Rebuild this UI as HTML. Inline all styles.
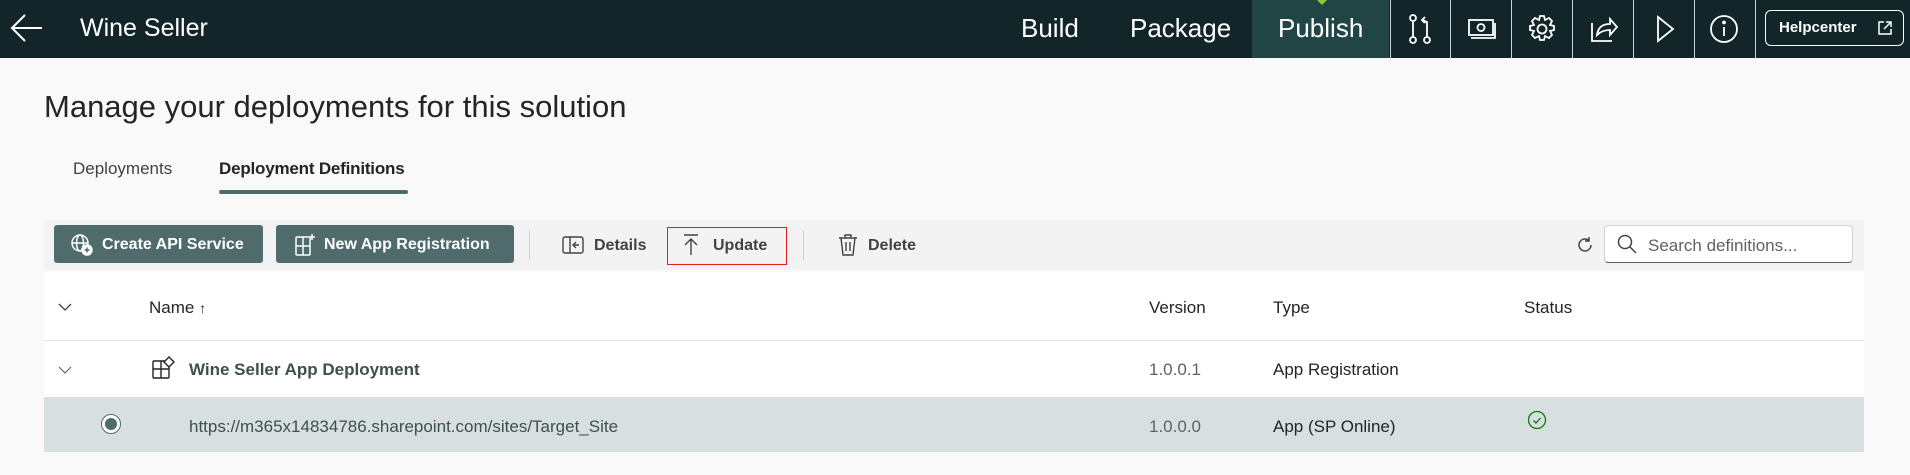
<!DOCTYPE html>
<html><head><meta charset="utf-8"><style>
*{box-sizing:border-box;margin:0;padding:0}
body{width:1910px;height:475px;background:#f9f9f9;font-family:"Liberation Sans",sans-serif;color:#242424;position:relative;overflow:hidden}
.a{position:absolute;white-space:nowrap}
.hdr{position:absolute;left:0;top:0;width:1910px;height:58px;background:#12262a}
.nav{color:#fff;font-size:26px;top:13px}
.sep{position:absolute;top:0;width:1px;height:58px;background:#c9d3d3}
.ic{position:absolute;top:13px}
.btn{position:absolute;top:225px;height:38px;background:#4f6b6b;border-radius:3px;color:#fff;font-weight:bold;font-size:16px;line-height:40px}
.t16{font-size:17px}
</style></head><body>
<div class="hdr"></div>
<svg class="a" style="left:10px;top:12px" width="34" height="32" viewBox="0 0 34 32"><path d="M32 16H3M15 3L2 16l13 13" stroke="#fff" stroke-width="2" fill="none"/></svg>
<div class="a nav" style="left:80px;top:14px;font-size:25px">Wine Seller</div>
<div class="a nav" style="left:1021px">Build</div>
<div class="a nav" style="left:1130px">Package</div>
<div class="a" style="left:1252px;top:0;width:137px;height:58px;background:#214545"></div>
<div class="a nav" style="left:1278px">Publish</div>
<div class="a" style="left:1317px;top:0;width:0;height:0;border-left:5px solid transparent;border-right:5px solid transparent;border-top:5px solid #8cc63f"></div>
<div class="sep" style="left:1390px"></div><div class="sep" style="left:1450px"></div><div class="sep" style="left:1511px"></div><div class="sep" style="left:1572px"></div><div class="sep" style="left:1633px"></div><div class="sep" style="left:1694px"></div><div class="sep" style="left:1755px"></div>
<svg class="ic" style="left:1405px" width="30" height="32" viewBox="0 0 30 32" fill="none" stroke="#fff" stroke-width="1.8"><circle cx="8" cy="5" r="3"/><circle cx="8" cy="27" r="3"/><circle cx="22" cy="27" r="3"/><path d="M8 8v16M22 24V9l-4-2M22 9l-4 0"/><path d="M20 4l-3 3 3 3"/></svg>
<svg class="ic" style="left:1465px" width="32" height="32" viewBox="0 0 32 32" fill="none" stroke="#fff" stroke-width="1.8"><rect x="4" y="7" width="24" height="15"/><circle cx="16" cy="14.5" r="3.5"/><path d="M6 25h24V10"/></svg>
<svg class="ic" style="left:1526px" width="32" height="32" viewBox="0 0 32 32" fill="none" stroke="#fff" stroke-width="1.8"><circle cx="16" cy="16" r="4.5"/><path d="M14 3h4l1 4 4-2 3 3-2 4 4 1v4l-4 1 2 4-3 3-4-2-1 4h-4l-1-4-4 2-3-3 2-4-4-1v-4l4-1-2-4 3-3 4 2z"/></svg>
<svg class="ic" style="left:1587px" width="32" height="32" viewBox="0 0 32 32" fill="none" stroke="#fff" stroke-width="1.8"><path d="M5 10v18h20"/><path d="M10 22c1-8 6-11 13-11V6l7 8-7 8v-5c-6 0-10 2-13 5z"/></svg>
<svg class="ic" style="left:1650px" width="30" height="32" viewBox="0 0 30 32" fill="none" stroke="#fff" stroke-width="1.8"><path d="M8 4l15 12L8 28z"/></svg>
<svg class="ic" style="left:1708px" width="32" height="32" viewBox="0 0 32 32" fill="none" stroke="#fff" stroke-width="1.8"><circle cx="16" cy="16" r="13"/><path d="M16 14v9"/><circle cx="16" cy="9.5" r="1" fill="#fff"/></svg>
<div class="a" style="left:1765px;top:10px;width:139px;height:36px;border:1.5px solid #fff;border-radius:6px;color:#fff;font-weight:bold;font-size:15px;line-height:33px;padding-left:13px">Helpcenter</div>
<svg class="a" style="left:1878px;top:21px" width="14" height="14" viewBox="0 0 14 14" fill="none" stroke="#fff" stroke-width="1.5"><path d="M6 1H1v12h12V8M8 1h5v5M13 1L6 8"/></svg>

<div class="a" style="left:44px;top:89px;font-size:31px;color:#242424">Manage your deployments for this solution</div>
<div class="a t16" style="left:73px;top:159px;color:#424242">Deployments</div>
<div class="a t16" style="left:219px;top:159px;font-weight:bold;color:#242424;letter-spacing:-0.2px">Deployment Definitions</div>
<div class="a" style="left:219px;top:190px;width:189px;height:4px;border-radius:2px;background:#4f6b6b"></div>

<div class="a" style="left:44px;top:220px;width:1820px;height:50px;background:#f3f3f3"></div>
<div class="btn" style="left:54px;width:209px;padding-left:48px">Create API Service</div>
<svg class="a" style="left:70px;top:233px" width="24" height="24" viewBox="0 0 24 24" fill="none" stroke="#fff" stroke-width="1.5"><circle cx="10" cy="10" r="8"/><ellipse cx="10" cy="10" rx="3.5" ry="8"/><path d="M2 10h16"/><circle cx="17" cy="17" r="5" fill="#fff"/><path d="M17 14.5v5M14.5 17h5" stroke="#4f6b6b"/></svg>
<div class="btn" style="left:276px;width:238px;padding-left:48px">New App Registration</div>
<svg class="a" style="left:294px;top:233px" width="22" height="24" viewBox="0 0 22 24" fill="none" stroke="#fff" stroke-width="1.5"><rect x="2" y="4" width="14" height="18" rx="1"/><path d="M2 13h14M9 4v18M18 1v6M15 4h6"/></svg>
<div class="a" style="left:529px;top:230px;width:1px;height:30px;background:#d0d0d0"></div>
<svg class="a" style="left:562px;top:236px" width="22" height="18" viewBox="0 0 22 18" fill="none" stroke="#424242" stroke-width="1.4"><rect x="1" y="1" width="20" height="16" rx="2"/><path d="M8 1v16M14 6l-3 3 3 3M11 9h6"/></svg>
<div class="a" style="left:594px;top:237px;font-size:16px;font-weight:bold;color:#424242">Details</div>
<div class="a" style="left:667px;top:227px;width:120px;height:38px;border:1.5px solid #e02020"></div>
<svg class="a" style="left:683px;top:233px" width="16" height="24" viewBox="0 0 16 24" fill="none" stroke="#424242" stroke-width="1.4"><path d="M1 2h14M8 22V6M2 12l6-6 6 6"/></svg>
<div class="a" style="left:713px;top:237px;font-size:16px;font-weight:bold;color:#424242">Update</div>
<div class="a" style="left:803px;top:230px;width:1px;height:30px;background:#d0d0d0"></div>
<svg class="a" style="left:838px;top:233px" width="20" height="24" viewBox="0 0 20 24" fill="none" stroke="#424242" stroke-width="1.4"><path d="M1 5h18M7 5V2h6v3M3 5l2 17h10l2-17M8 9v9M12 9v9"/></svg>
<div class="a" style="left:868px;top:237px;font-size:16px;font-weight:bold;color:#424242">Delete</div>
<svg class="a" style="left:1575px;top:235px" width="20" height="20" viewBox="0 0 20 20" fill="none" stroke="#424242" stroke-width="1.5"><path d="M16 10a6 6 0 1 1-2-4.5M14 2v4h-4"/></svg>
<div class="a" style="left:1604px;top:225px;width:249px;height:38px;background:#fff;border:1px solid #d1d1d1;border-bottom-color:#616161;border-radius:4px"></div>
<svg class="a" style="left:1617px;top:234px" width="20" height="20" viewBox="0 0 20 20" fill="none" stroke="#424242" stroke-width="1.5"><circle cx="8" cy="8" r="6.5"/><path d="M13 13l6 6"/></svg>
<div class="a t16" style="left:1648px;top:236px;color:#616161">Search definitions...</div>

<div class="a" style="left:44px;top:272px;width:1820px;height:180px;background:#fff"></div>
<div class="a" style="left:44px;top:340px;width:1820px;height:1px;background:#e0e0e0"></div>
<div class="a" style="left:44px;top:397px;width:1820px;height:55px;background:#d8dfdf"></div>
<svg class="a" style="left:58px;top:302px" width="14" height="10" viewBox="0 0 14 10" fill="none" stroke="#424242" stroke-width="1.3"><path d="M1 2l6 6 6-6"/></svg>
<div class="a t16" style="left:149px;top:298px">Name <span style="font-size:14px">↑</span></div>
<div class="a t16" style="left:1149px;top:298px">Version</div>
<div class="a t16" style="left:1273px;top:298px">Type</div>
<div class="a t16" style="left:1524px;top:298px">Status</div>
<svg class="a" style="left:58px;top:365px" width="14" height="10" viewBox="0 0 14 10" fill="none" stroke="#616161" stroke-width="1.1"><path d="M1 2l6 6 6-6"/></svg>
<svg class="a" style="left:152px;top:356px" width="24" height="24" viewBox="0 0 24 24" fill="none" stroke="#242424" stroke-width="1.4"><rect x="1" y="5" width="16" height="17" rx="1"/><path d="M1 13h16M9 5v17"/><path d="M17 1l5 5-5 5-5-5z" fill="#fff"/></svg>
<div class="a t16" style="left:189px;top:360px;font-weight:bold;color:#3d4f4f">Wine Seller App Deployment</div>
<div class="a t16" style="left:1149px;top:360px;color:#616161">1.0.0.1</div>
<div class="a t16" style="left:1273px;top:360px">App Registration</div>
<div class="a" style="left:101px;top:414px;width:20px;height:20px;border-radius:50%;border:1.5px solid #4f6b6b;background:#fff"></div>
<div class="a" style="left:105px;top:418px;width:12px;height:12px;border-radius:50%;background:#4f6b6b"></div>
<div class="a t16" style="left:189px;top:417px;color:#3d4f4f">https://m365x14834786.sharepoint.com/sites/Target_Site</div>
<div class="a t16" style="left:1149px;top:417px;color:#616161">1.0.0.0</div>
<div class="a t16" style="left:1273px;top:417px">App (SP Online)</div>
<svg class="a" style="left:1527px;top:410px" width="20" height="20" viewBox="0 0 20 20" fill="none" stroke="#107c10" stroke-width="1.3"><circle cx="10" cy="10" r="8.5"/><path d="M6.5 10.5l2.5 2.5 4.5-5"/></svg>
</body></html>
